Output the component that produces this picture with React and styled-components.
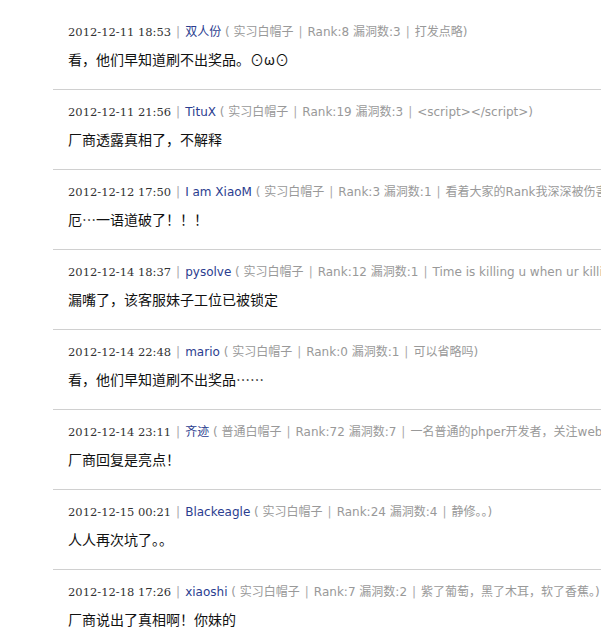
import React from "react";
import styled, { createGlobalStyle } from "styled-components";

const Global = createGlobalStyle`
  html, body { margin: 0; padding: 0; background: #fff; overflow: hidden; }
  body { width: 601px; height: 635px; }
`;

const List = styled.ul`
  list-style: none;
  margin: 0 0 0 53px;
  padding: 10px 0 0 0;
  overflow: hidden;
`;

const Item = styled.li`
  padding: 13px 0 19px 15px;
  border-bottom: 1px solid #d0d0d0;
  white-space: nowrap;
`;

const Meta = styled.div`
  height: 18px;
  line-height: 18px;
  font-family: "DejaVu Sans", Verdana, "Noto Sans CJK SC", sans-serif;
  font-size: 12px;
  color: #999;
`;

const Date = styled.span`
  font-family: "DejaVu Serif", Georgia, serif;
  font-size: 11.5px;
  color: #333;
`;

const Sep = styled.span`
  color: #aaa;
  margin: 0 5px;
`;

const Name = styled.a`
  color: #2b3d8f;
  text-decoration: none;
`;

const Info = styled.span`
  color: #999;
`;

const Content = styled.div`
  margin-top: 7px;
  height: 22px;
  line-height: 22px;
  font-family: "Noto Sans CJK SC", "DejaVu Sans", sans-serif;
  font-size: 14px;
  color: #111;
`;

const comments = [
  { date: "2012-12-11 18:53", name: "双人份", level: "实习白帽子", rank: 8, bugs: 3, sig: "打发点略)", text: "看，他们早知道刷不出奖品。⊙ω⊙" },
  { date: "2012-12-11 21:56", name: "TituX", level: "实习白帽子", rank: 19, bugs: 3, sig: "<script></script>)", text: "厂商透露真相了，不解释" },
  { date: "2012-12-12 17:50", name: "I am XiaoM", level: "实习白帽子", rank: 3, bugs: 1, sig: "看着大家的Rank我深深被伤害了)", text: "厄…一语道破了！！！" },
  { date: "2012-12-14 18:37", name: "pysolve", level: "实习白帽子", rank: 12, bugs: 1, sig: "Time is killing u when ur killing time)", text: "漏嘴了，该客服妹子工位已被锁定" },
  { date: "2012-12-14 22:48", name: "mario", level: "实习白帽子", rank: 0, bugs: 1, sig: "可以省略吗)", text: "看，他们早知道刷不出奖品……" },
  { date: "2012-12-14 23:11", name: "齐迹", level: "普通白帽子", rank: 72, bugs: 7, sig: "一名普通的phper开发者，关注web安全)", text: "厂商回复是亮点！" },
  { date: "2012-12-15 00:21", name: "Blackeagle", level: "实习白帽子", rank: 24, bugs: 4, sig: "静修。。)", text: "人人再次坑了。。" },
  { date: "2012-12-18 17:26", name: "xiaoshi", level: "实习白帽子", rank: 7, bugs: 2, sig: "紫了葡萄，黑了木耳，软了香蕉。)", text: "厂商说出了真相啊！你妹的" },
];

export default function App() {
  return (
    <>
      <Global />
      <List>
        {comments.map((c, i) => (
          <Item key={i}>
            <Meta>
              <Date>{c.date}</Date>
              <Sep>|</Sep>
              <Name href="#">{c.name}</Name>
              <Info>
                {" ( "}{c.level}<Sep>|</Sep>Rank:{c.rank} 漏洞数:{c.bugs}<Sep>|</Sep>{c.sig}
              </Info>
            </Meta>
            <Content>{c.text}</Content>
          </Item>
        ))}
      </List>
    </>
  );
}
